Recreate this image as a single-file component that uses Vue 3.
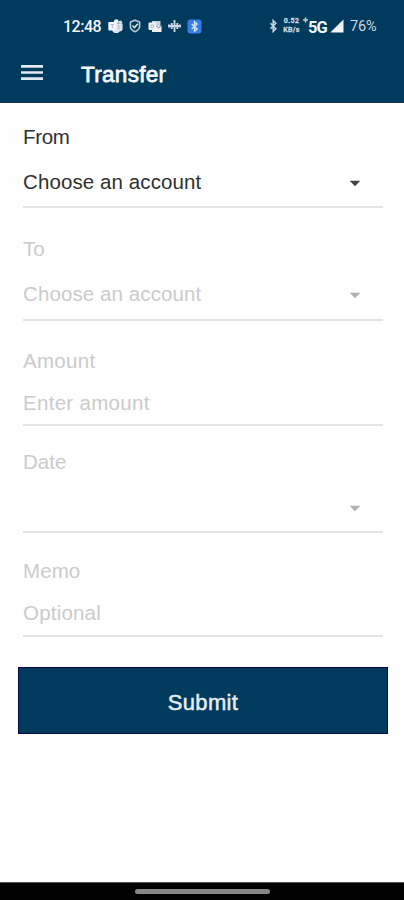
<script setup>
const fields = [
  { id: 'from', label: 'From', value: 'Choose an account', arrow: true },
  { id: 'to', label: 'To', value: 'Choose an account', arrow: true },
  { id: 'amount', label: 'Amount', value: 'Enter amount', arrow: false },
  { id: 'date', label: 'Date', value: '', arrow: true },
  { id: 'memo', label: 'Memo', value: 'Optional', arrow: false },
]
</script>

<template>
  <div class="screen">
    <header class="top">
      <div class="status">
        <span class="clock">12:48</span>
        <svg class="teams" width="15" height="14" viewBox="0 0 15 14">
          <circle cx="8.3" cy="2.6" r="2.4" fill="#e8edf2" />
          <circle cx="12.3" cy="3.3" r="1.8" fill="#d5dde5" />
          <path d="M5 4.5h9.6v5a3 3 0 0 1-3 3A4.3 4.3 0 0 1 4 11z" fill="#dce3ea" />
          <rect x="0.3" y="3" width="8" height="8.5" rx="1" fill="#f5f7fa" />
          <path d="M2.5 5.5h3.6M4.3 5.5v3.7M10.8 6v4" stroke="#a9b8c5" stroke-width="0.9" />
        </svg>
        <svg class="shield" width="12" height="14" viewBox="0 0 12 14">
          <path d="M6 1.2 10.600 3v4.300c0 2.400-1.800 4.300-4.600 5.400-2.800-1.100-4.600-3-4.600-5.400V3z" fill="none" stroke="#b9c7d2" stroke-width="1.6" />
          <path d="m3.5 6.5 2 2 3.400-3.700" fill="none" stroke="#dce4ea" stroke-width="1.6" />
        </svg>
        <svg class="outlook" width="14" height="13" viewBox="0 0 14 13">
          <path d="M4 1h8.500v5H4z" fill="#cbd5df" />
          <path d="M4 6h9.500v6H4z" fill="#eef2f5" />
          <rect x="0.5" y="2.5" width="7.5" height="7.5" rx="1" fill="#f1f4f7" />
          <circle cx="4.2" cy="6.2" r="1.5" fill="none" stroke="#9dadbb" />
          <path d="m8.500 6 2 2 3-2.500" fill="none" stroke="#6f8799" />
        </svg>
        <svg class="wave" width="13" height="14" viewBox="0 0 13 14">
          <path d="M1 5.500v3M3.700 4v6M6.500 1v12M9.300 4v6M12 5.500v3M0 7h13" stroke="#cbd6df" stroke-width="1.9" />
        </svg>
        <svg class="bt-box" width="15" height="15" viewBox="0 0 15 15">
          <rect x="0.5" y="0.5" width="14" height="14" rx="3" fill="#367ee5" />
          <path d="m4.700 5 5.400 5-2.600 2.300V2.700L10.100 5l-5.400 5" fill="none" stroke="#d7e7ff" stroke-width="1.3" />
        </svg>
        <svg class="bt" width="9" height="14" viewBox="0 0 9 14">
          <path d="m1.500 4.300 5.300 5.400-2.600 2.700V1.600l2.600 2.700-5.300 5.400" fill="none" stroke="#c5d2dc" stroke-width="1.6" />
        </svg>
        <span class="rate"><span>0.52</span><span>KB/s</span></span>
        <svg class="plus" width="5" height="7" viewBox="0 0 5 7">
          <path d="M2.500 0.500v5M0 3h5" stroke="#bccbd6" stroke-width="1.6" />
        </svg>
        <span class="net">5G</span>
        <svg class="signal" width="14" height="14" viewBox="0 0 14 14">
          <path d="M13.500.5v13H.3z" fill="#f1f5f8" />
        </svg>
        <span class="battery">76%</span>
      </div>
      <div class="bar">
        <svg width="22" height="17" viewBox="0 0 22 17">
          <path d="M0 2.300h22M0 8.500h22M0 14.700h22" stroke="#e3eaf2" stroke-width="2.7" />
        </svg>
        <h1>Transfer</h1>
      </div>
    </header>

    <main>
      <section v-for="f in fields" :key="f.id" class="field" :class="f.id">
        <label>{{ f.label }}</label>
        <div class="control">
          <span>{{ f.value }}</span>
          <svg v-if="f.arrow" width="12" height="7" viewBox="0 0 12 7">
            <path d="M.7.7h10.600L6 6.300z" fill="currentColor" />
          </svg>
        </div>
      </section>
      <button type="button">Submit</button>
    </main>

    <footer><i></i></footer>
  </div>
</template>

<style>
body {
  margin: 0;
}
</style>

<style scoped>
.screen {
  width: 404px;
  height: 900px;
  display: flex;
  flex-direction: column;
  overflow: hidden;
  background: #fefefe;
  font-family: "Liberation Sans", Arial, sans-serif;
}
.top {
  box-sizing: border-box;
  height: 103px;
  background: #003a5c;
  border-bottom: 1px solid #16294f;
  color: #f4f7fa;
}
.status {
  height: 52px;
  display: flex;
  align-items: center;
  padding-left: 63px;
  font-family: Roboto, sans-serif;
  white-space: nowrap;
}
.status svg {
  flex: none;
}
.clock {
  width: 37px;
  font-size: 16px;
  font-weight: 500;
  letter-spacing: -0.5px;
}
.teams {
  margin-left: 8px;
}
.shield {
  margin-left: 6px;
}
.outlook {
  margin-left: 7px;
}
.wave {
  margin-left: 6px;
}
.bt-box {
  margin-left: 6px;
}
.bt {
  margin-left: 67px;
}
.rate {
  width: 19px;
  margin-left: 4px;
  display: flex;
  flex-direction: column;
  align-items: center;
  font-size: 7px;
  line-height: 9px;
  font-weight: 700;
  letter-spacing: 0.4px;
  color: #cbd7e0;
  -webkit-text-stroke: 0.3px currentColor;
}
.plus {
  margin: 0 0 11px 2px;
}
.net {
  width: 19px;
  margin: 3px 0 0;
  font-size: 16.5px;
  font-weight: 700;
  letter-spacing: -0.9px;
}
.signal {
  margin-left: 3px;
}
.battery {
  margin-left: 6px;
  font-size: 14.5px;
  letter-spacing: -0.1px;
  color: #cbd7e0;
}
.bar {
  display: flex;
  align-items: center;
  height: 40px;
  padding: 0 21px;
  gap: 38px;
}
h1 {
  margin: 5px 0 0;
  font-size: 22.5px;
  line-height: 26px;
  font-weight: 400;
  letter-spacing: 0.3px;
  -webkit-text-stroke: 0.8px currentColor;
}
main {
  flex: 1;
  display: flex;
  flex-direction: column;
}
.field {
  box-sizing: border-box;
  margin: 0 21px 0 23px;
  display: flex;
  flex-direction: column;
  border-bottom: 2px solid #e4e4e4;
  color: #cbcbcb;
  font-size: 20.5px;
  line-height: 24px;
  letter-spacing: 0.1px;
}
.control {
  display: flex;
  align-items: center;
  justify-content: space-between;
  height: 24px;
  margin-top: 21px;
  padding-right: 22px;
}
.control svg {
  margin-top: 2px;
  color: #b0b0b0;
}
.from {
  height: 105px;
  padding-top: 22px;
  color: #303030;
}
.from label {
  letter-spacing: -0.3px;
}
.from .control svg {
  color: #444;
}
.to {
  padding-top: 29px;
  height: 113px;
}
.amount {
  padding-top: 28px;
  height: 105px;
}
.amount label {
  letter-spacing: 0.3px;
}
.amount .control {
  margin-top: 18px;
  letter-spacing: 0.3px;
}
.date {
  padding-top: 24px;
  height: 107px;
}
.date label {
  letter-spacing: 0;
}
.date .control {
  margin-top: 21px;
  justify-content: flex-end;
}
.memo {
  padding-top: 26px;
  height: 104px;
}
.memo .control {
  margin-top: 18px;
  letter-spacing: 0.2px;
}
button {
  box-sizing: border-box;
  height: 67px;
  margin: 30px 16px 0 18px;
  padding: 4px 0 0;
  border: 1.5px solid #080846;
  background: #003a5c;
  color: #e6edf3;
  font-family: inherit;
  font-size: 22px;
  letter-spacing: 0.3px;
  -webkit-text-stroke: 0.5px currentColor;
}
footer {
  box-sizing: border-box;
  height: 18px;
  display: flex;
  justify-content: center;
  align-items: center;
  background: #000;
  border-top: 1px solid #555;
}
footer i {
  width: 135px;
  height: 5px;
  border-radius: 3px;
  background: #868686;
}
</style>
